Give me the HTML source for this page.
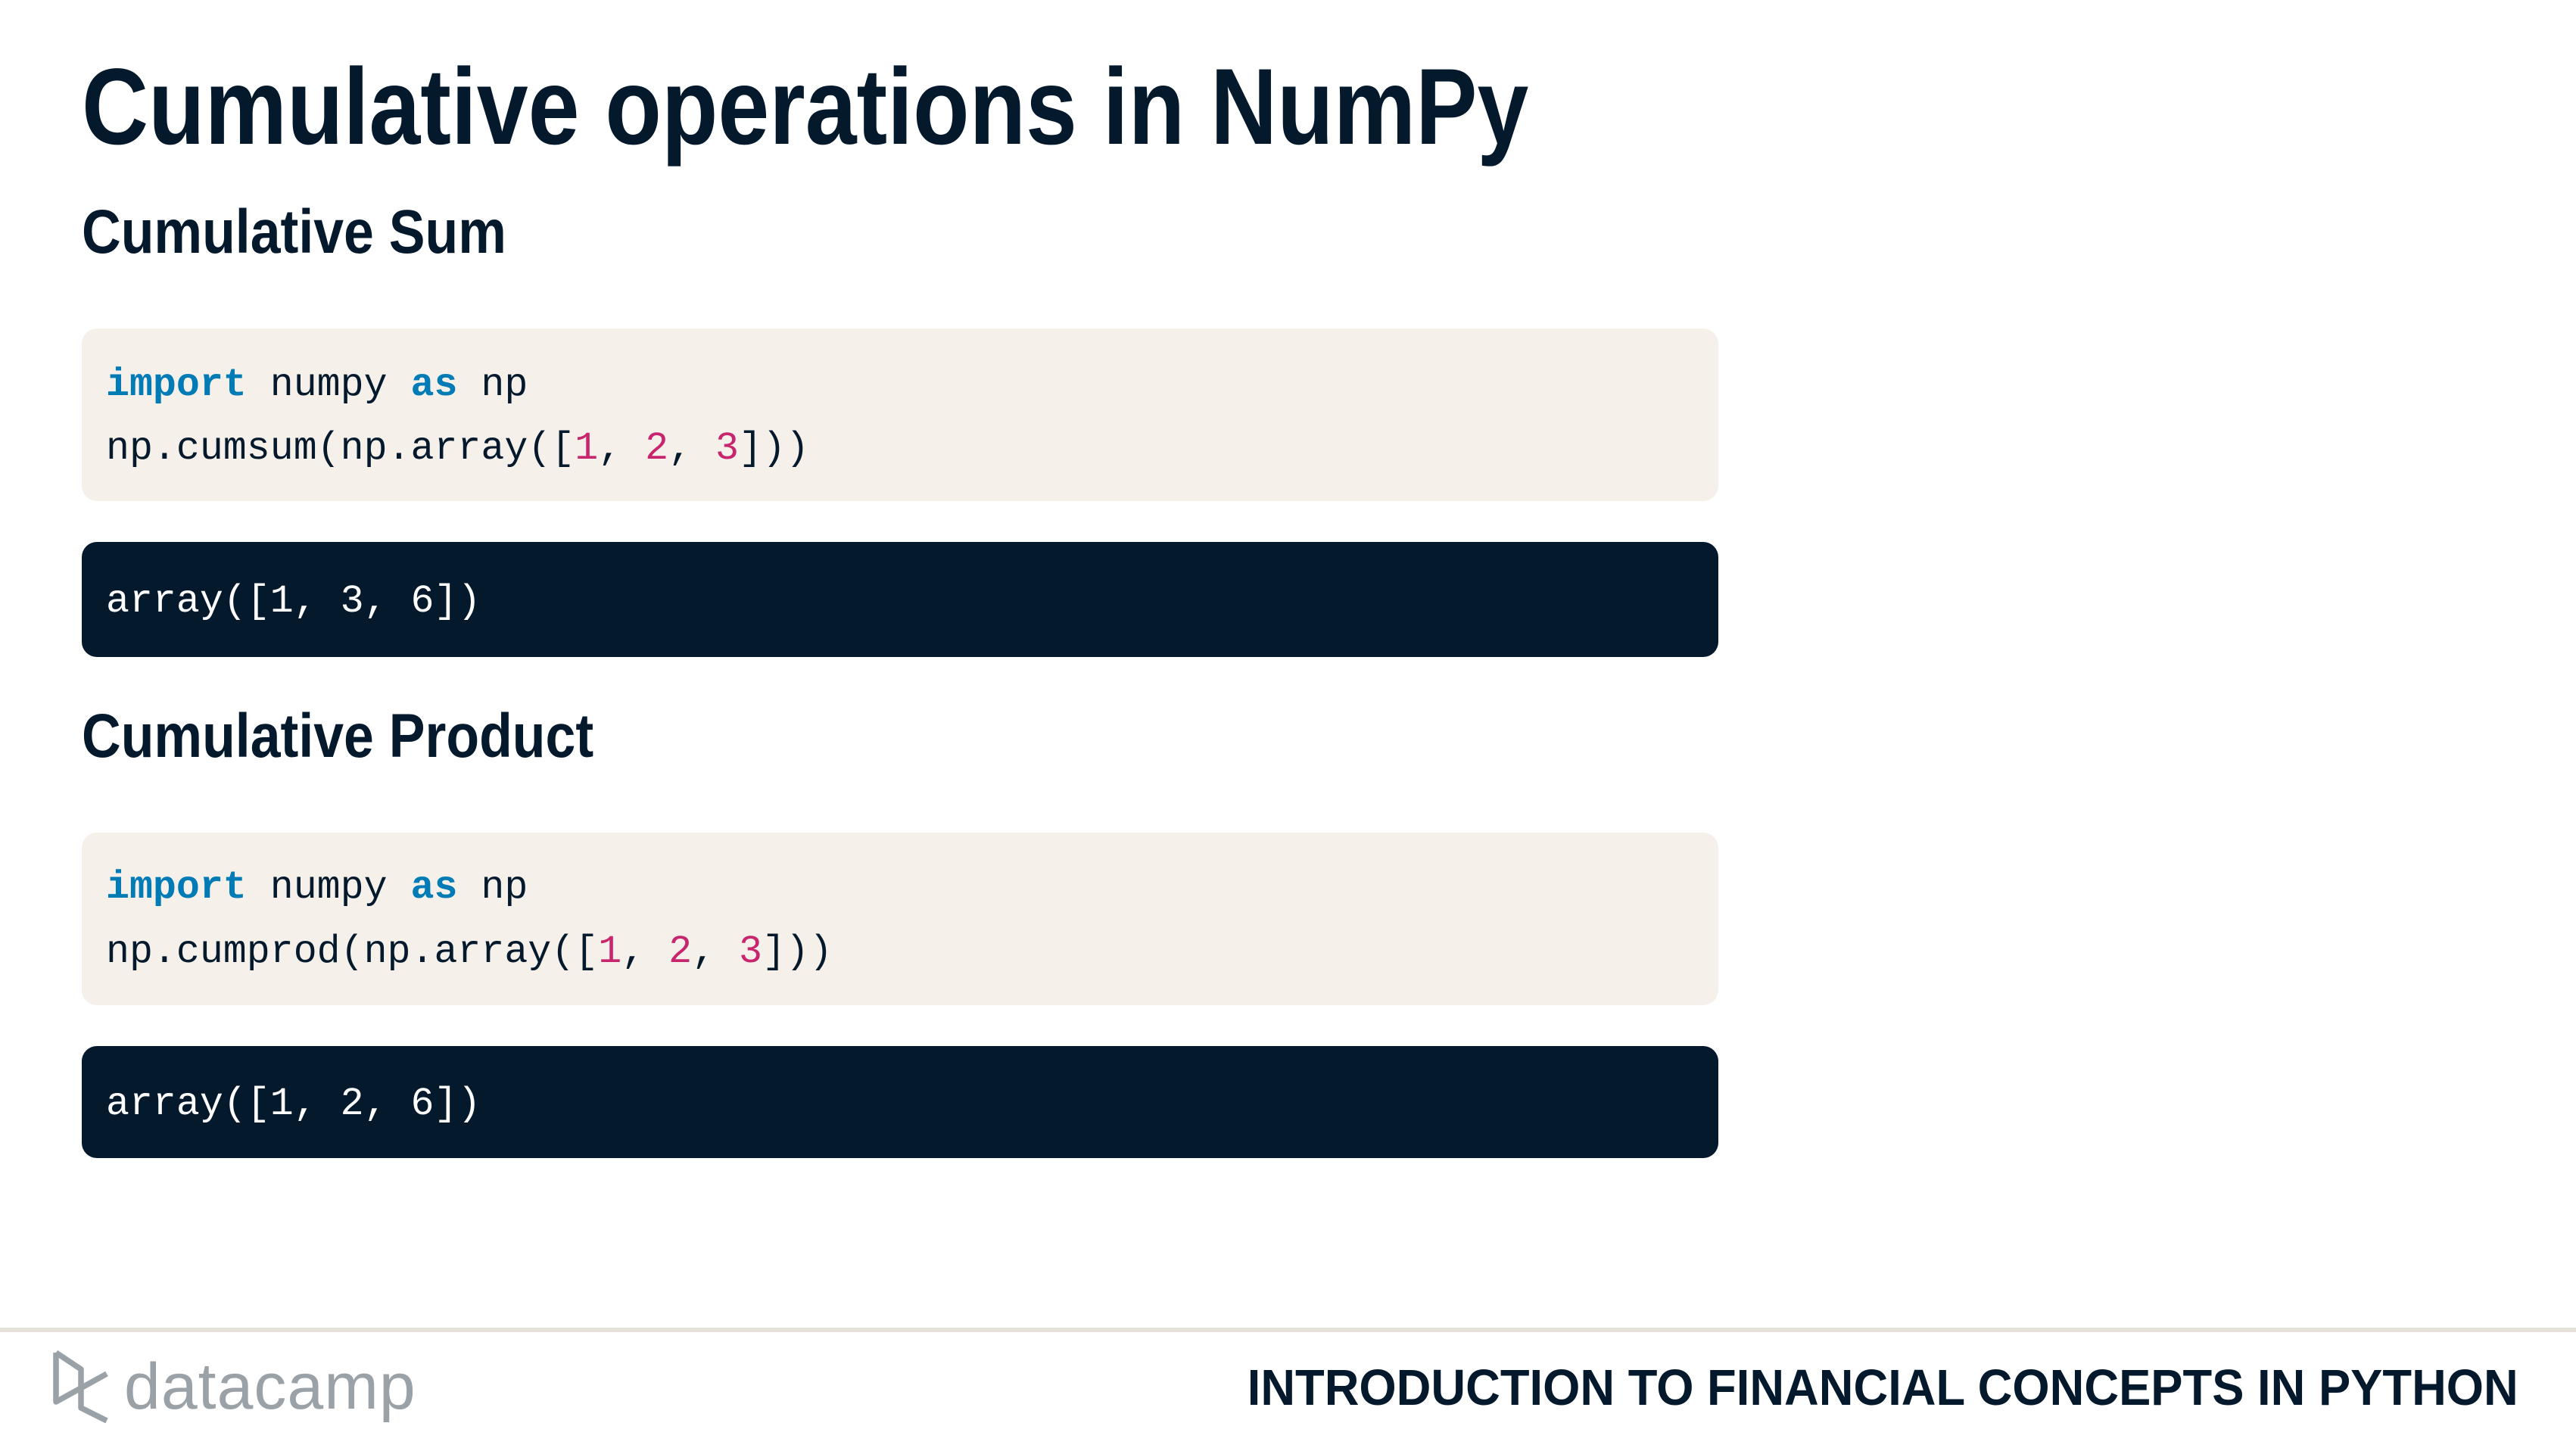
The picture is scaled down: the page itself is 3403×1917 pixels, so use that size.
<!DOCTYPE html>
<html><head><meta charset="utf-8"><style>
*{margin:0;padding:0;box-sizing:border-box}
body{width:3403px;height:1917px;background:#fff;position:relative;overflow:hidden;font-family:"Liberation Sans",sans-serif;color:#05192d}
.t{position:absolute;left:108px;white-space:nowrap;font-weight:bold;transform-origin:0 0}
.box{position:absolute;left:108px;width:2162px;border-radius:20px}
.light{background:#f5f1ea}
.dark{background:#05192d}
.code{position:absolute;left:140px;font-family:"Liberation Mono",monospace;font-size:51.6px;white-space:pre;line-height:1}
.k{color:#007bb6;font-weight:bold}
.n{color:#c7266e}
</style></head><body>
<div class="t" style="top:70px;font-size:143px;line-height:1;transform:scaleX(0.853)">Cumulative operations in NumPy</div>
<div class="t" style="top:266px;font-size:82px;line-height:1;transform:scaleX(0.873)">Cumulative Sum</div>
<div class="box light" style="top:434px;height:228px"></div>
<div class="code" style="top:484px;color:#05192d"><span class="k">import</span> numpy <span class="k">as</span> np</div>
<div class="code" style="top:568px;color:#05192d">np.cumsum(np.array([<span class="n">1</span>, <span class="n">2</span>, <span class="n">3</span>]))</div>
<div class="box dark" style="top:716px;height:152px"></div>
<div class="code" style="top:770px;color:#fff">array([1, 3, 6])</div>
<div class="t" style="top:932px;font-size:82px;line-height:1;transform:scaleX(0.873)">Cumulative Product</div>
<div class="box light" style="top:1100px;height:228px"></div>
<div class="code" style="top:1148px;color:#05192d"><span class="k">import</span> numpy <span class="k">as</span> np</div>
<div class="code" style="top:1233px;color:#05192d">np.cumprod(np.array([<span class="n">1</span>, <span class="n">2</span>, <span class="n">3</span>]))</div>
<div class="box dark" style="top:1382px;height:148px"></div>
<div class="code" style="top:1434px;color:#fff">array([1, 2, 6])</div>
<div style="position:absolute;left:0;top:1754px;width:3403px;height:6px;background:#e5e1da"></div>
<svg style="position:absolute;left:0;top:1770px" width="160" height="120" viewBox="0 1770 160 120">
<g fill="none" stroke="#9aa2a8" stroke-width="7.5" stroke-linejoin="round">
<path d="M74 1787 L74 1852 L141 1815"/>
<path d="M74 1787 L107 1809 L107 1860 L141 1877"/>
</g></svg>
<div style="position:absolute;left:164px;top:1789px;font-size:86px;line-height:1;color:#9aa2a8;white-space:nowrap;letter-spacing:1px">datacamp</div>
<div style="position:absolute;right:76px;top:1800px;font-size:67px;line-height:1;font-weight:bold;white-space:nowrap;transform:scaleX(0.945);transform-origin:100% 0">INTRODUCTION TO FINANCIAL CONCEPTS IN PYTHON</div>
</body></html>
